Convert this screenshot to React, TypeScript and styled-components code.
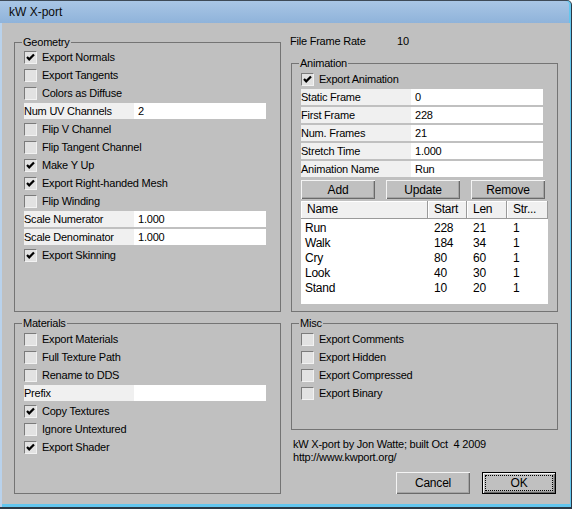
import { Fragment } from 'react';
import styled, { createGlobalStyle } from 'styled-components';

const GlobalStyle = createGlobalStyle`
  html, body {
    margin: 0;
    padding: 0;
    background: #ffffff;
  }

  body {
    font-family: "Liberation Sans", Arial, sans-serif;
    font-size: 11px;
    color: #000;
  }
`;

const Window = styled.div`
  width: 572px;
  height: 509px;
  box-sizing: border-box;
  display: flex;
  flex-direction: column;
  border-top: 1px solid #3e4a57;
  border-right: 1px solid #2c3844;
  border-bottom: 2px solid #2c3844;
  border-top-right-radius: 5px;
  padding: 0 1px 3px 2px;
  background: #63c6ee;
  box-shadow: inset 2px 0 0 #b9d2ec;
`;

const TitleBar = styled.div`
  height: 22px;
  flex: none;
  margin: 0 0 0 -2px;
  padding-left: 9px;
  display: flex;
  align-items: center;
  font-size: 12px;
  color: #0b0b0b;
  background: linear-gradient(#a9c6e5, #8fb3da);
  border-top-right-radius: 4px;
  box-shadow: inset -1px 0 0 #63c6ee;
`;

const Body = styled.div`
  flex: 1;
  display: flex;
  gap: 10px;
  padding: 13px 11px 0 12px;
  background: #c0c0c0;
  letter-spacing: -0.22px;
`;

const Column = styled.div`
  width: 267px;
  flex: none;
  display: flex;
  flex-direction: column;
`;

const Group = styled.fieldset<{ $h: number; $gap?: number }>`
  margin: ${(p) => p.$gap ?? 0}px 0 0 0;
  padding: 0 8px 0 9px;
  min-width: 0;
  height: ${(p) => p.$h}px;
  box-sizing: border-box;
  border: 1px solid #747474;
`;

const Legend = styled.legend`
  padding: 0 1px;
  margin-left: -2px;
  line-height: 13px;
  font-size: 11px;
`;

const Rows = styled.div<{ $shift?: number }>`
  display: flex;
  flex-direction: column;
  margin-top: ${(p) => p.$shift ?? 0}px;
`;

const CheckRow = styled.div`
  display: flex;
  align-items: center;
  gap: 5px;
  height: 18px;
`;

const Box = styled.span`
  width: 13px;
  height: 13px;
  flex: none;
  box-sizing: border-box;
  display: flex;
  align-items: center;
  justify-content: center;
  border: 1px solid;
  border-color: #7b7b7b #f2f2f2 #f2f2f2 #7b7b7b;
  background: #e2e2e2;
`;

const FieldRow = styled.div`
  display: flex;
  width: 242px;
  height: 16px;
  margin: 1px 0;
`;

const FieldLabel = styled.span`
  width: 110px;
  flex: none;
  line-height: 16px;
  background: #f0f0f0;
  white-space: nowrap;
`;

const FieldInput = styled.input`
  width: 132px;
  height: 16px;
  box-sizing: border-box;
  border: none;
  outline: none;
  padding: 0 0 0 4px;
  margin: 0;
  font: inherit;
  letter-spacing: inherit;
  color: #000;
  background: #fff;
`;

const RateRow = styled.div`
  display: flex;
  height: 13px;
  line-height: 13px;
  margin: -1px 0 0 -1px;
`;

const RateLabel = styled.span`
  width: 107px;
`;

const ButtonBar = styled.div<{ $gap: number; $top: number; $end?: boolean }>`
  display: flex;
  gap: ${(p) => p.$gap}px;
  margin-top: ${(p) => p.$top}px;
  margin-right: ${(p) => (p.$end ? 2 : 0)}px;
  justify-content: ${(p) => (p.$end ? 'flex-end' : 'flex-start')};
`;

const PushButton = styled.button<{ $h: number; $default?: boolean }>`
  width: 74px;
  height: ${(p) => p.$h}px;
  margin: 0;
  padding: 0;
  font: inherit;
  font-size: 12px;
  letter-spacing: -0.2px;
  color: #000;
  background: #c0c0c0;
  border: ${(p) => (p.$default ? '1px solid #000' : 'none')};
  box-shadow: inset 1px 1px #f4f4f4, inset -1px -1px #6a6a6a, inset -2px -2px #a4a4a4;
  outline: ${(p) => (p.$default ? '1px dotted #000' : 'none')};
  outline-offset: -4px;
`;

const List = styled.div`
  width: 247px;
  height: 103px;
  margin-top: 2px;
  background: #fff;
`;

const ListGrid = styled.div`
  display: grid;
  grid-template-columns: 127px 39px 40px 41px;
`;

const HeadCell = styled.span`
  height: 18px;
  box-sizing: border-box;
  line-height: 17px;
  padding-left: 6px;
  font-size: 12px;
  letter-spacing: -0.25px;
  background: #f0f0f0;
  border-right: 1px solid #9a9a9a;
  border-bottom: 1px solid #9a9a9a;
  box-shadow: inset 1px 1px #ffffff;
  white-space: nowrap;
`;

const ListBody = styled(ListGrid)`
  padding-top: 2px;
`;

const Cell = styled.span<{ $first?: boolean }>`
  height: 15px;
  line-height: 15px;
  font-size: 12px;
  letter-spacing: -0.25px;
  padding-left: ${(p) => (p.$first ? 4 : 6)}px;
`;

const Credits = styled.div`
  margin: 8px 0 0 2px;
  line-height: 13px;
`;

const CheckMark = () => (
  <svg width="9" height="9" viewBox="0 0 9 9">
    <polyline points="1,4 3.2,6.3 8,1.4" fill="none" stroke="#000" strokeWidth="2.2" />
  </svg>
);

type CheckProps = { label: string; checked?: boolean };

const Check = ({ label, checked }: CheckProps) => (
  <CheckRow>
    <Box>{checked && <CheckMark />}</Box>
    <span>{label}</span>
  </CheckRow>
);

type FieldProps = { label: string; value: string };

const Field = ({ label, value }: FieldProps) => (
  <FieldRow>
    <FieldLabel>{label}</FieldLabel>
    <FieldInput readOnly value={value} />
  </FieldRow>
);

const animations = [
  { name: 'Run', start: 228, len: 21, str: 1 },
  { name: 'Walk', start: 184, len: 34, str: 1 },
  { name: 'Cry', start: 80, len: 60, str: 1 },
  { name: 'Look', start: 40, len: 30, str: 1 },
  { name: 'Stand', start: 10, len: 20, str: 1 },
];

export default function App() {
  return (
    <>
      <GlobalStyle />
      <Window>
        <TitleBar>kW X-port</TitleBar>
        <Body>
          <Column>
            <Group $h={276}>
              <Legend>Geometry</Legend>
              <Rows $shift={-1}>
                <Check label="Export Normals" checked />
                <Check label="Export Tangents" />
                <Check label="Colors as Diffuse" />
                <Field label="Num UV Channels" value="2" />
                <Check label="Flip V Channel" />
                <Check label="Flip Tangent Channel" />
                <Check label="Make Y Up" checked />
                <Check label="Export Right-handed Mesh" checked />
                <Check label="Flip Winding" />
                <Field label="Scale Numerator" value="1.000" />
                <Field label="Scale Denominator" value="1.000" />
                <Check label="Export Skinning" checked />
              </Rows>
            </Group>
            <Group $h={177} $gap={5}>
              <Legend>Materials</Legend>
              <Rows>
                <Check label="Export Materials" />
                <Check label="Full Texture Path" />
                <Check label="Rename to DDS" />
                <Field label="Prefix" value="" />
                <Check label="Copy Textures" checked />
                <Check label="Ignore Untextured" />
                <Check label="Export Shader" checked />
              </Rows>
            </Group>
          </Column>

          <Column>
            <RateRow>
              <RateLabel>File Frame Rate</RateLabel>
              <span>10</span>
            </RateRow>
            <Group $h={255} $gap={9}>
              <Legend>Animation</Legend>
              <Rows>
                <Check label="Export Animation" checked />
                <Field label="Static Frame" value="0" />
                <Field label="First Frame" value="228" />
                <Field label="Num. Frames" value="21" />
                <Field label="Stretch Time" value="1.000" />
                <Field label="Animation Name" value="Run" />
                <ButtonBar $gap={11} $top={2}>
                  <PushButton $h={19}>Add</PushButton>
                  <PushButton $h={19}>Update</PushButton>
                  <PushButton $h={19}>Remove</PushButton>
                </ButtonBar>
                <List>
                  <ListGrid>
                    <HeadCell>Name</HeadCell>
                    <HeadCell>Start</HeadCell>
                    <HeadCell>Len</HeadCell>
                    <HeadCell>Str...</HeadCell>
                  </ListGrid>
                  <ListBody>
                    {animations.map((a) => (
                      <Fragment key={a.name}>
                        <Cell $first>{a.name}</Cell>
                        <Cell>{a.start}</Cell>
                        <Cell>{a.len}</Cell>
                        <Cell>{a.str}</Cell>
                      </Fragment>
                    ))}
                  </ListBody>
                </List>
              </Rows>
            </Group>
            <Group $h={113} $gap={5}>
              <Legend>Misc</Legend>
              <Rows>
                <Check label="Export Comments" />
                <Check label="Export Hidden" />
                <Check label="Export Compressed" />
                <Check label="Export Binary" />
              </Rows>
            </Group>
            <Credits>
              kW X-port by Jon Watte; built Oct&nbsp;&nbsp;4 2009
              <br />
              http://www.kwport.org/
            </Credits>
            <ButtonBar $gap={12} $top={8} $end>
              <PushButton $h={22}>Cancel</PushButton>
              <PushButton $h={22} $default>
                OK
              </PushButton>
            </ButtonBar>
          </Column>
        </Body>
      </Window>
    </>
  );
}
